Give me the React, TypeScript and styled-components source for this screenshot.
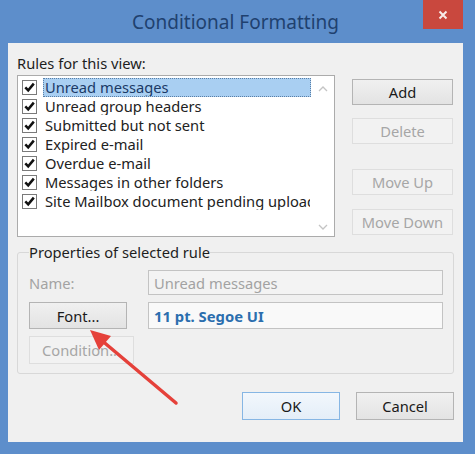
import React from "react";
import styled, { createGlobalStyle } from "styled-components";

const GlobalStyle = createGlobalStyle`
  html, body {
    margin: 0;
    padding: 0;
  }
  body {
    font-family: "Noto Sans", "Open Sans", sans-serif;
    background: #5d8ecb;
  }
`;

const Frame = styled.div`
  position: relative;
  width: 475px;
  height: 454px;
  background: #5d8ecb;
  display: flex;
  flex-direction: column;
  overflow: hidden;
`;

const TitleBar = styled.div`
  height: 43px;
  display: grid;
  grid-template-columns: 40px 1fr 40px;
  padding: 0 12px;
`;

const Title = styled.div`
  grid-column: 2;
  text-align: center;
  line-height: 45px;
  font-size: 19px;
  color: #1f416f;
  padding-right: 4px;
`;

const CloseButton = styled.div`
  grid-column: 3;
  height: 29px;
  background: #c9483e;
  display: flex;
  align-items: center;
  justify-content: center;
`;

const Client = styled.div`
  flex: 1;
  margin: 0 12px 12px 8px;
  background: #f0f0f0;
  padding: 11px 9px 0 9px;
  display: flex;
  flex-direction: column;
`;

const Label = styled.div<{ $disabled?: boolean }>`
  font-size: 14.7px;
  line-height: 18px;
  color: ${(p) => (p.$disabled ? "#a3a3a3" : "#1e1e1e")};
`;

const TopRow = styled.div`
  display: flex;
  margin-top: 3px;
`;

const ListBox = styled.div`
  width: 318px;
  height: 162px;
  box-sizing: border-box;
  border: 1px solid #ababab;
  background: #ffffff;
  display: flex;
`;

const List = styled.div`
  width: 293px;
  padding: 2px 0 0 4px;
  box-sizing: border-box;
`;

const Row = styled.div`
  height: 19px;
  display: flex;
  align-items: center;
`;

const Check = styled.div`
  width: 15px;
  height: 15px;
  box-sizing: border-box;
  border: 1px solid #7a7a7a;
  background: #fff;
  display: flex;
  align-items: center;
  justify-content: center;
  flex-shrink: 0;
`;

const ItemText = styled.div<{ $selected?: boolean }>`
  margin-left: 6px;
  flex: 1;
  height: 19px;
  box-sizing: border-box;
  padding-left: 1px;
  font-size: 14.7px;
  line-height: 17px;
  white-space: nowrap;
  overflow: hidden;
  color: ${(p) => (p.$selected ? "#1b3a66" : "#222")};
  background: ${(p) => (p.$selected ? "#a9cff2" : "transparent")};
  border: 1px ${(p) => (p.$selected ? "dotted #5a7fa6" : "solid transparent")};
`;

const ScrollBar = styled.div`
  flex: 1;
  display: flex;
  flex-direction: column;
  justify-content: space-between;
  align-items: center;
  padding: 10px 0 6px;
`;

const ButtonColumn = styled.div`
  margin-left: 17px;
  display: flex;
  flex-direction: column;
`;

const Button = styled.div<{
  $width?: number;
  $height?: number;
  $top?: number;
  $disabled?: boolean;
  $default?: boolean;
}>`
  width: ${(p) => p.$width ?? 101}px;
  height: ${(p) => p.$height ?? 26}px;
  margin-top: ${(p) => p.$top ?? 0}px;
  box-sizing: border-box;
  display: flex;
  align-items: center;
  justify-content: center;
  font-size: 14.7px;
  color: ${(p) => (p.$disabled ? "#a6a6a6" : "#1a1a1a")};
  border: 1px solid
    ${(p) => (p.$default ? "#86b6e4" : p.$disabled ? "#dedede" : "#b4b4b4")};
  background: ${(p) =>
    p.$default
      ? "linear-gradient(#f2f7fc, #e4eef8)"
      : p.$disabled
      ? "#f2f2f2"
      : "linear-gradient(#f0f0f0, #e3e3e3)"};
`;

const Group = styled.fieldset`
  margin: 6px 0 0 0;
  padding: 9px 10px 9px 11px;
  border: 1px solid #d8d8d8;
  border-radius: 3px;
  min-width: 0;
`;

const Legend = styled.legend`
  padding: 0;
  font-size: 14.7px;
  line-height: 18px;
  color: #1e1e1e;
`;

const PropGrid = styled.div`
  display: grid;
  grid-template-columns: 119px 295px;
  grid-template-rows: 25px 27px 28px;
  row-gap: 7px;
  align-items: center;
`;

const TextBox = styled.div<{ $value?: boolean }>`
  height: 100%;
  box-sizing: border-box;
  border: 1px solid #c3c3c3;
  background: ${(p) => (p.$value ? "#f9f9f9" : "#f3f3f3")};
  padding-left: 5px;
  display: flex;
  align-items: center;
  font-size: ${(p) => (p.$value ? 14.8 : 14.7)}px;
  font-weight: ${(p) => (p.$value ? 700 : 400)};
  color: ${(p) => (p.$value ? "#2b6eae" : "#a2a2a2")};
`;

const Footer = styled.div`
  display: flex;
  justify-content: flex-end;
  gap: 16px;
  margin-top: 18px;
`;

const Overlay = styled.svg`
  position: absolute;
  left: 0;
  top: 0;
  pointer-events: none;
`;

const rules = [
  "Unread messages",
  "Unread group headers",
  "Submitted but not sent",
  "Expired e-mail",
  "Overdue e-mail",
  "Messages in other folders",
  "Site Mailbox document pending upload",
];

const CheckMark = () => (
  <svg width="11" height="11" viewBox="0 0 11 11">
    <path d="M1.3 5.4 L4.2 8.4 L9.8 1.6" fill="none" stroke="#111" strokeWidth="2.5" />
  </svg>
);

const Chevron = ({ up }: { up?: boolean }) => (
  <svg width="10" height="6" viewBox="0 0 10 6">
    <path
      d={up ? "M1 5 L5 1 L9 5" : "M1 1 L5 5 L9 1"}
      fill="none"
      stroke="#c4c4c4"
      strokeWidth="1.3"
    />
  </svg>
);

export default function App() {
  return (
    <>
      <GlobalStyle />
      <Frame>
        <TitleBar>
          <Title>Conditional Formatting</Title>
          <CloseButton>
            <svg width="10" height="10" viewBox="0 0 10 10">
              <path d="M1.5 1.5 L8.5 8.5 M8.5 1.5 L1.5 8.5" stroke="#f8ebe8" strokeWidth="2" />
            </svg>
          </CloseButton>
        </TitleBar>
        <Client>
          <Label>Rules for this view:</Label>
          <TopRow>
            <ListBox>
              <List>
                {rules.map((r, i) => (
                  <Row key={r}>
                    <Check>
                      <CheckMark />
                    </Check>
                    <ItemText $selected={i === 0}>{r}</ItemText>
                  </Row>
                ))}
              </List>
              <ScrollBar>
                <Chevron up />
                <Chevron />
              </ScrollBar>
            </ListBox>
            <ButtonColumn>
              <Button $top={4}>Add</Button>
              <Button $top={13} $disabled>Delete</Button>
              <Button $top={25} $disabled>Move Up</Button>
              <Button $top={14} $disabled>Move Down</Button>
            </ButtonColumn>
          </TopRow>
          <Group>
            <Legend>Properties of selected rule</Legend>
            <PropGrid>
              <Label $disabled>Name:</Label>
              <TextBox>Unread messages</TextBox>
              <Button $width={98} $height={27}>Font...</Button>
              <TextBox $value>11 pt. Segoe UI</TextBox>
              <Button $width={105} $height={28} $disabled>Condition...</Button>
            </PropGrid>
          </Group>
          <Footer>
            <Button $width={98} $height={28} $default>OK</Button>
            <Button $width={98} $height={28}>Cancel</Button>
          </Footer>
        </Client>
        <Overlay width="475" height="454" viewBox="0 0 475 454">
          <line x1="176" y1="403" x2="100" y2="339" stroke="#e5413a" strokeWidth="3.5" strokeLinecap="round" />
          <polygon points="90,330 111,336 99,350" fill="#e5413a" />
        </Overlay>
      </Frame>
    </>
  );
}
